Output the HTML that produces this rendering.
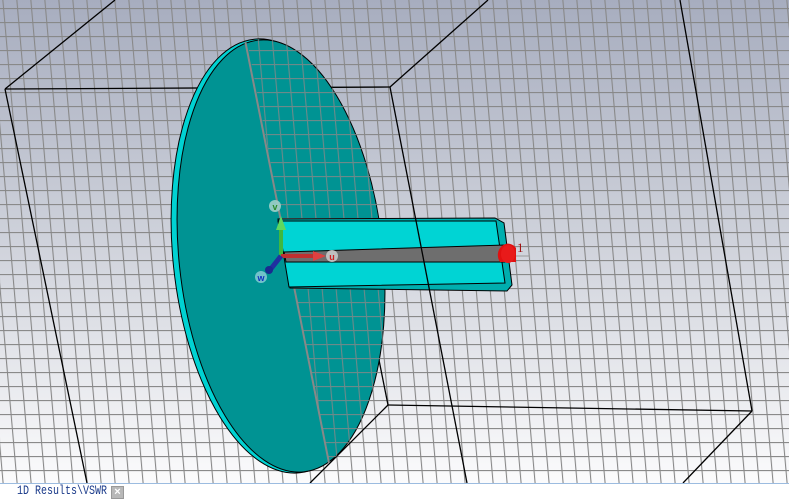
<!DOCTYPE html>
<html><head><meta charset="utf-8"><style>
html,body{margin:0;padding:0;width:789px;height:501px;overflow:hidden;background:#fff}
#bar{position:absolute;left:0;top:483px;width:789px;height:18px;background:#fff;border-top:1px solid #9cbce0}
#bar span{position:absolute;left:17px;top:1px;font:10px "Liberation Mono",monospace;color:#1a3a8a;display:inline-block;transform:scaleY(1.3);transform-origin:0 0}
#x{position:absolute;left:111px;top:2px;width:13px;height:13px;background:#b8b8b8;border:1px solid #999;box-sizing:border-box;color:#fff;font:bold 11px "Liberation Sans",sans-serif;text-align:center;line-height:11px}
</style></head><body>
<svg width="789" height="483" style="position:absolute;left:0;top:0">
<defs>
<linearGradient id="bg" x1="0" y1="0" x2="0" y2="1">
<stop offset="0" stop-color="#a7adbf"/><stop offset="0.5" stop-color="#cfd2db"/><stop offset="1" stop-color="#fbfbfc"/>
</linearGradient>
<pattern id="grid" width="14" height="14" patternUnits="userSpaceOnUse" patternTransform="translate(3,8) skewX(5)">
<line x1="0.5" y1="0" x2="0.5" y2="14" stroke="#888" stroke-width="1.2"/>
<line x1="0" y1="0.5" x2="14" y2="0.5" stroke="#888" stroke-width="1.2"/>
</pattern>
<clipPath id="dc"><ellipse cx="280" cy="256" rx="104" ry="218" transform="rotate(-6 280 256)"/></clipPath>
</defs>
<rect width="789" height="483" fill="url(#bg)"/>
<rect width="789" height="483" fill="url(#grid)"/>
<g stroke="#000" fill="none" stroke-width="1.3">
<line x1="5" y1="89" x2="115" y2="0"/>
<line x1="5" y1="89" x2="390" y2="87"/>
<line x1="5" y1="89" x2="87" y2="483"/>
<line x1="390" y1="87" x2="488" y2="0"/>
<line x1="680" y1="0" x2="752" y2="411"/>
<line x1="388" y1="405" x2="752" y2="411"/>
<line x1="752" y1="411" x2="683" y2="483"/>
<line x1="388" y1="405" x2="310" y2="483"/>
<line x1="388" y1="405" x2="375" y2="340"/>
</g>
<ellipse cx="277" cy="256" rx="104" ry="218" transform="rotate(-6 277 256)" fill="#00d2d2" stroke="#000" stroke-width="1"/>
<ellipse cx="281" cy="256" rx="102" ry="217" transform="rotate(-6 281 256)" fill="#009393" stroke="#000" stroke-width="1"/>
<g clip-path="url(#dc)">
<polygon points="245,30 420,30 420,480 332,480" fill="url(#grid)" opacity="0.8"/>
<line x1="245" y1="40" x2="332" y2="478" stroke="#888" stroke-width="2"/>
</g>
<polygon points="278,219 495,218 504,223 512,285 507,291 290,288" fill="#00aeae" stroke="#000" stroke-width="1"/>
<polygon points="278,221 496,221 505,283 289,287" fill="#00d4d4" stroke="#000" stroke-width="1"/>
<polygon points="284,252 505,245 506,262 286,262" fill="#6e6e6e" stroke="#000" stroke-width="1"/>
<line x1="390" y1="87" x2="467" y2="483" stroke="#000" stroke-width="1.3"/>
<line x1="281" y1="256" x2="281" y2="226" stroke="#3fb83f" stroke-width="4"/>
<polygon points="276,230 286,230 281,216" fill="#5fd85f"/>
<line x1="281" y1="256" x2="316" y2="256" stroke="#c03030" stroke-width="4"/>
<polygon points="313,251 313,261 326,256" fill="#e04040"/>
<line x1="281" y1="256" x2="270" y2="270" stroke="#2030a0" stroke-width="5"/>
<circle cx="269" cy="270" r="4" fill="#1a2a90"/>
<circle cx="275" cy="206" r="6" fill="#9ecfc8" opacity="0.9"/><text x="275" y="210" font-family="Liberation Sans" font-size="9" font-weight="bold" fill="#2a8a2a" text-anchor="middle">v</text>
<circle cx="332" cy="256" r="6" fill="#c8c8c8" opacity="0.9"/><text x="332" y="260" font-family="Liberation Sans" font-size="9" font-weight="bold" fill="#d02020" text-anchor="middle">u</text>
<circle cx="261" cy="277" r="6" fill="#7ec8d0" opacity="0.9"/><text x="261" y="281" font-family="Liberation Sans" font-size="9" font-weight="bold" fill="#1030c0" text-anchor="middle">w</text>
<path d="M500,262 A9,10 0 0 1 516,248 L516,262 Z" fill="#e01010"/>
<ellipse cx="508" cy="254" rx="7" ry="9" fill="#e81a1a"/>
<line x1="516" y1="256" x2="530" y2="256" stroke="#999" stroke-width="1"/>
<text x="517" y="252" font-family="Liberation Serif" font-size="13" fill="#a01010">1</text>
</svg>
<div id="bar"><span>1D Results\VSWR</span><div id="x">×</div></div>
</body></html>
